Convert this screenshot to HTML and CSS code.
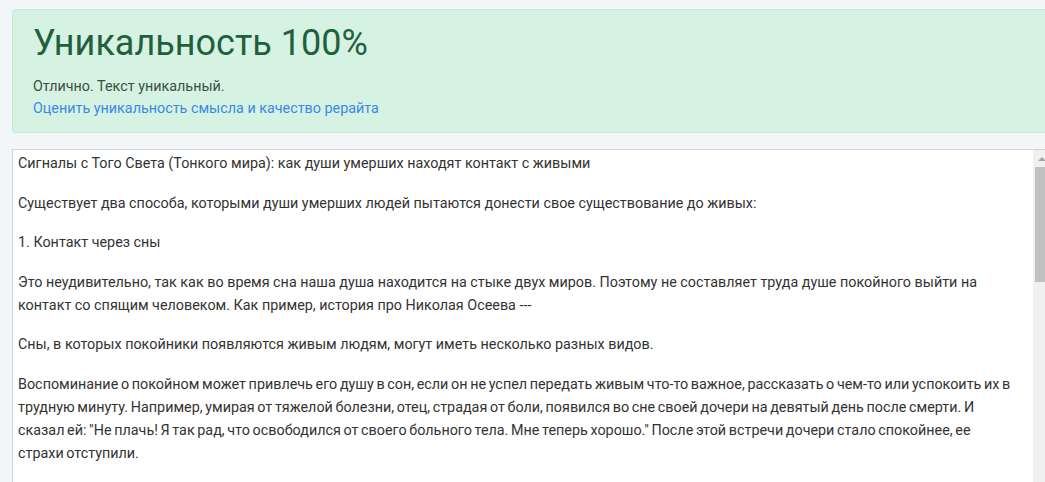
FILE: index.html
```html
<!DOCTYPE html>
<html lang="ru">
<head>
<meta charset="utf-8">
<title>Уникальность 100%</title>
<link rel="stylesheet" href="styles.css">
</head>
<body>
<main class="page">
  <section class="result">
    <h1 class="result-title">Уникальность 100%</h1>
    <p class="result-note">Отлично. Текст уникальный.</p>
    <a class="result-link" href="#">Оценить уникальность смысла и качество рерайта</a>
  </section>
  <div class="editor">
    <div class="editor-text">
      <p>Сигналы с Того Света (Тонкого мира): как души умерших находят контакт с живыми</p>
      <p>Существует два способа, которыми души умерших людей пытаются донести свое существование до живых:</p>
      <p>1. Контакт через сны</p>
      <p>Это неудивительно, так как во время сна наша душа находится на стыке двух миров. Поэтому не составляет труда душе покойного выйти на контакт со спящим человеком. Как пример, история про Николая Осеева ---</p>
      <p>Сны, в которых покойники появляются живым людям, могут иметь несколько разных видов.</p>
      <p class="dense">Воспоминание о покойном может привлечь его душу в сон, если он не успел передать живым что-то важное, рассказать о чем-то или успокоить их в трудную минуту. Например, умирая от тяжелой болезни, отец, страдая от боли, появился во сне своей дочери на девятый день после смерти. И сказал ей: "Не плачь! Я так рад, что освободился от своего больного тела. Мне теперь хорошо." После этой встречи дочери стало спокойнее, ее страхи&nbsp;отступили.</p>
    </div>
    <div class="scrollbar" aria-hidden="true">
      <div class="scroll-arrow"></div>
      <div class="scroll-thumb"></div>
    </div>
  </div>
</main>
</body>
</html>
```
FILE: styles.css
```css
html, body {
  margin: 0;
  padding: 0;
}

body {
  background: #f3f6f9;
  font-family: Roboto, "Noto Sans", "Liberation Sans", sans-serif;
  overflow: hidden;
}

.page {
  width: 1038px;
  padding: 9px 0 0 12px;
}

.result {
  box-sizing: border-box;
  width: 1040px;
  height: 124px;
  background: #d5f2e3;
  border: 1px solid #c6ead6;
  border-radius: 4px;
  padding: 10px 20px 0;
  margin-bottom: 16px;
}

.result-title {
  margin: 0;
  font-size: 36px;
  font-weight: 400;
  line-height: 46px;
  color: #22603c;
}

.result-note {
  margin: 10px 0 0;
  font-size: 14.35px;
  line-height: 22px;
  color: #3b4f44;
}

.result-link {
  display: block;
  font-size: 14.35px;
  line-height: 22px;
  color: #3a8ae4;
  text-decoration: none;
}

.editor {
  display: flex;
  height: 333px;
  background: #fff;
  border-top: 1px solid #cfd2d6;
  border-left: 1px solid #cfd2d6;
}

.editor-text {
  flex: 1;
  min-width: 0;
  overflow: hidden;
  padding: 2px 10px 0 5px;
  color: #333;
  font-size: 14.35px;
  line-height: 23px;
}

.editor-text p {
  margin: 0 0 16.5px;
}

.editor-text .dense {
  word-spacing: -0.9px;
}

.scrollbar {
  display: flex;
  flex-direction: column;
  width: 17px;
  flex: none;
  background: #f0f0f0;
}

.scroll-arrow {
  height: 17px;
  display: flex;
  align-items: center;
  justify-content: center;
}

.scroll-arrow::before {
  content: "";
  width: 0;
  height: 0;
  border-left: 4px solid transparent;
  border-right: 4px solid transparent;
  border-bottom: 4px solid #a3a3a3;
}

.scroll-thumb {
  height: 115px;
  margin: 0 2px;
  background: #c1c1c1;
}
```
